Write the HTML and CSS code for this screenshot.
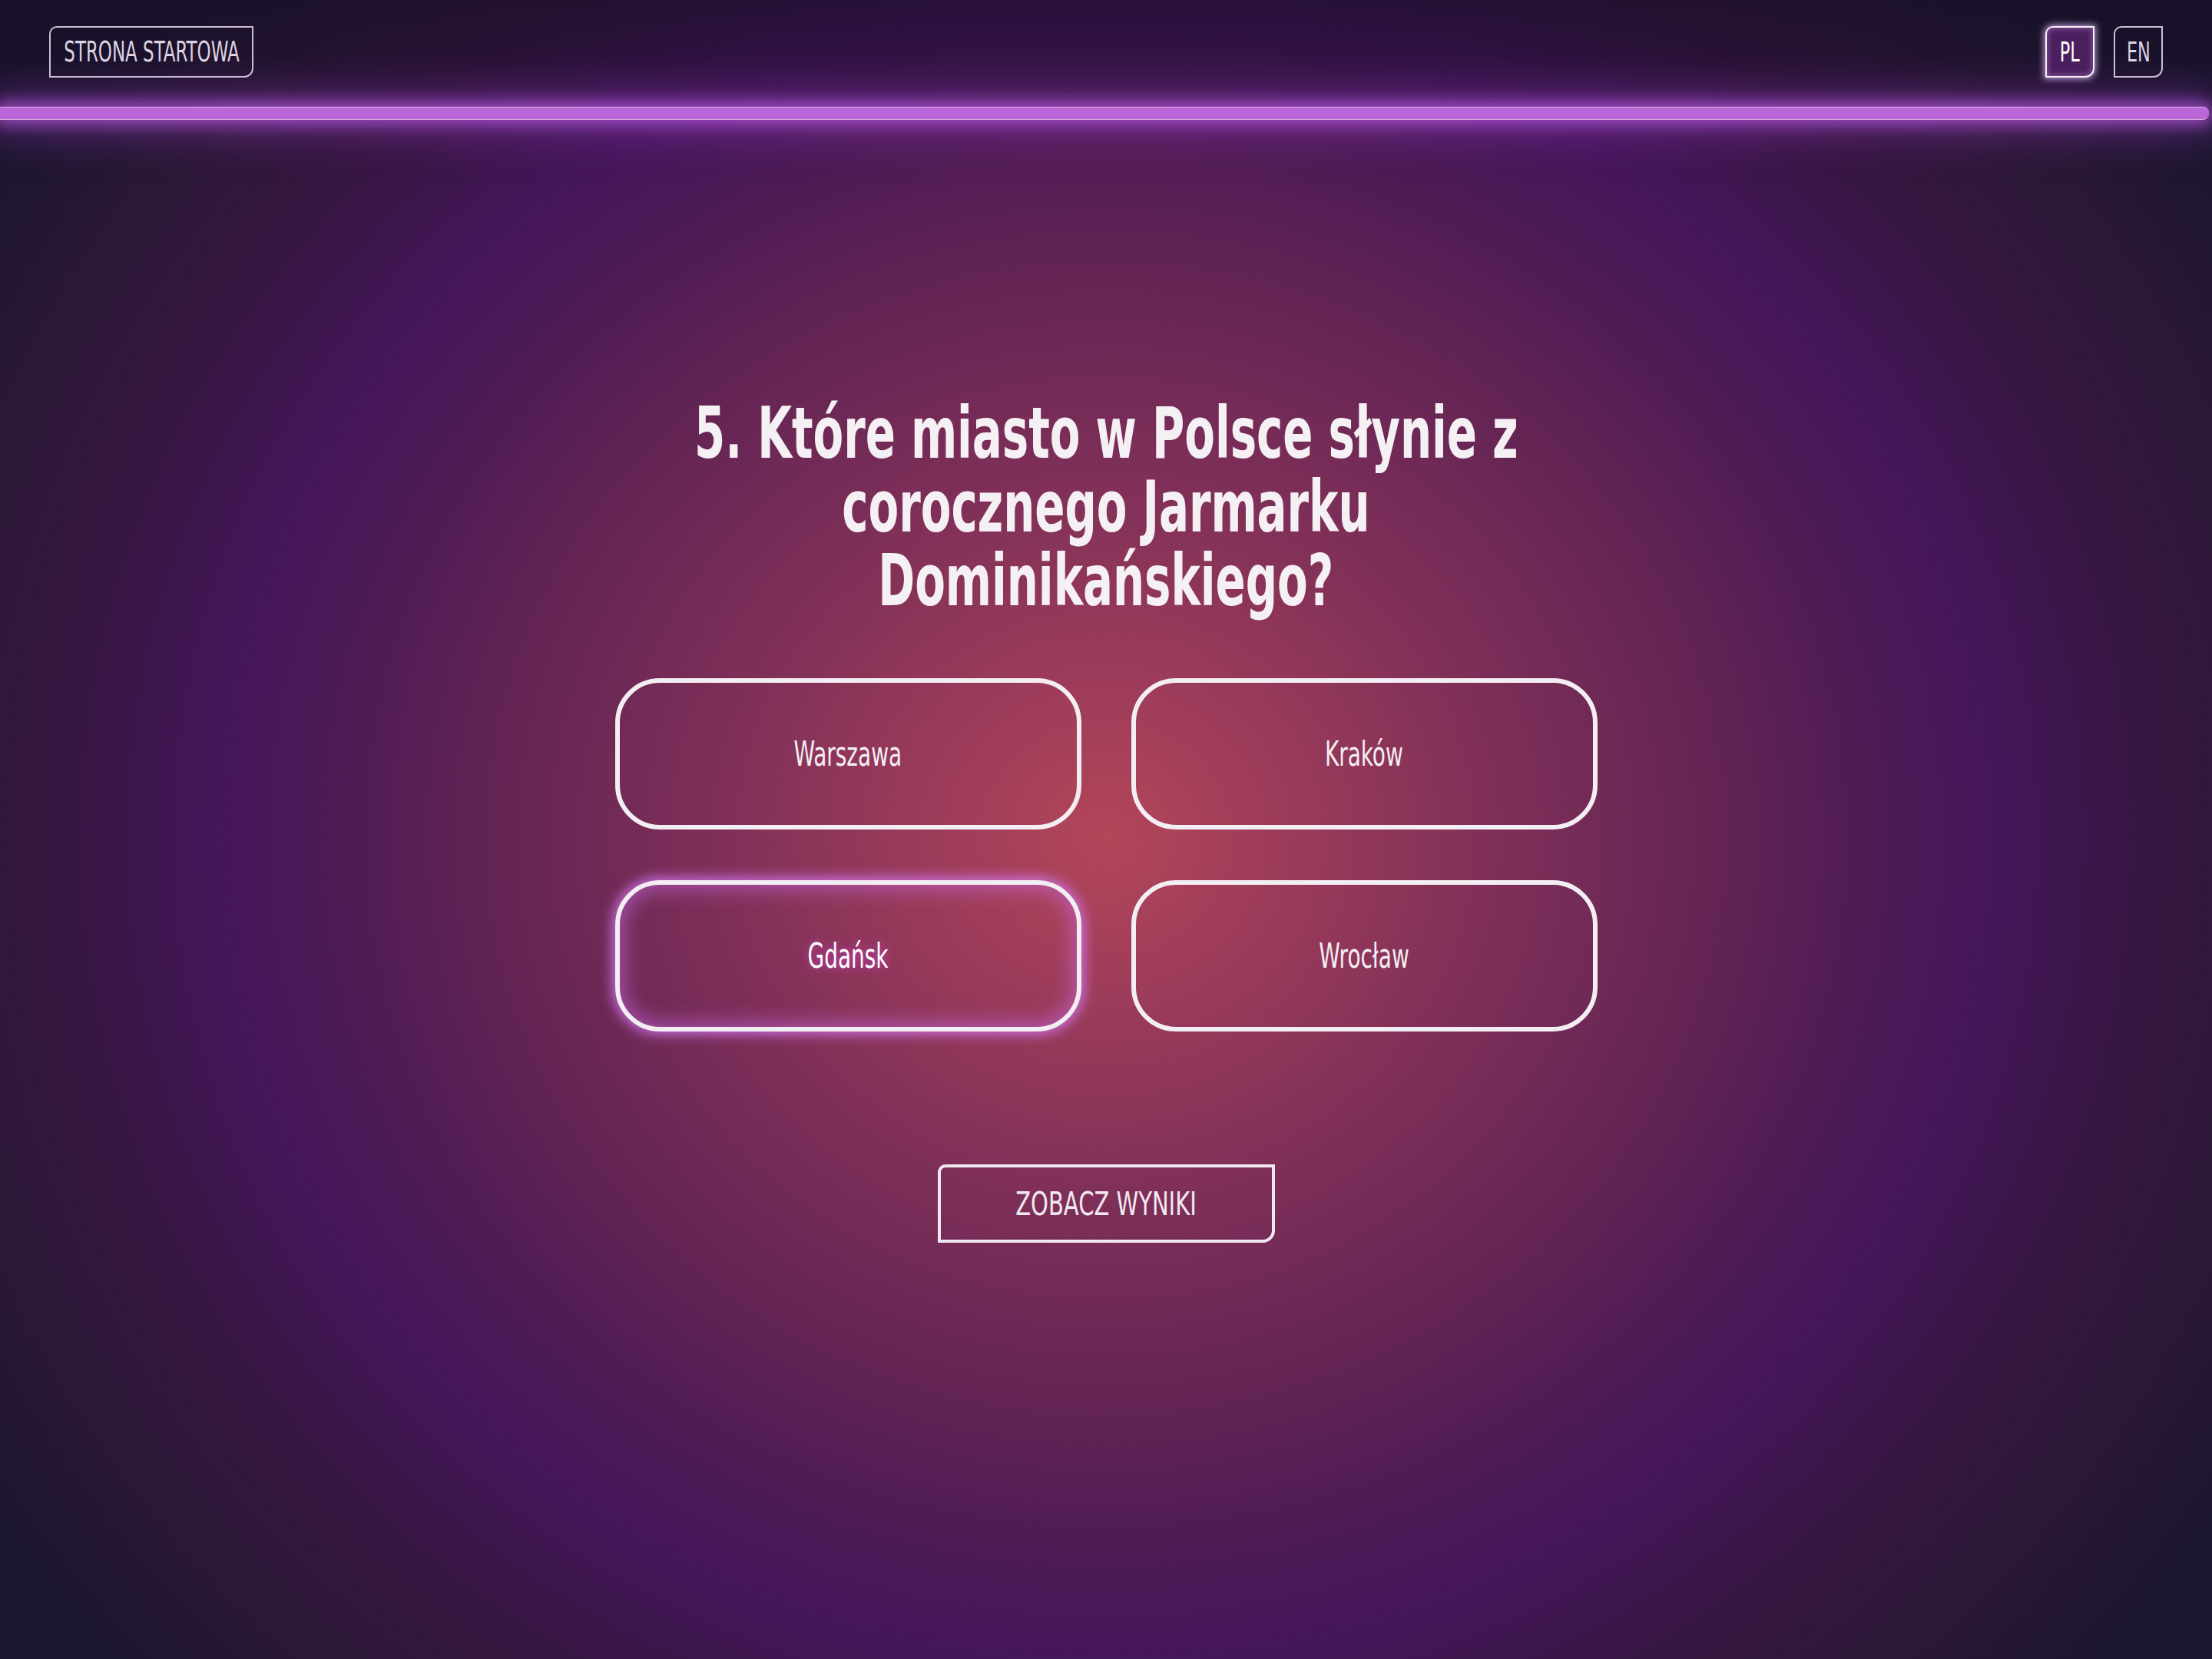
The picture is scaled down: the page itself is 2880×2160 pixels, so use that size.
FILE: index.html
```html
<!DOCTYPE html>
<html lang="pl">
<head>
<meta charset="utf-8">
<title>Quiz</title>
<link rel="stylesheet" href="styles.css">
</head>
<body>
<div class="page">
  <header class="topbar">
    <div class="topbar-row">
      <button class="nav-btn home-btn"><span class="narrow">STRONA STARTOWA</span></button>
      <div class="lang">
        <button class="nav-btn lang-btn active"><span class="narrow">PL</span></button>
        <button class="nav-btn lang-btn"><span class="narrow">EN</span></button>
      </div>
    </div>
    <div class="neon-line"></div>
  </header>
  <main class="quiz">
    <h1 class="question">
      <span class="narrow q-line">5. Które miasto w Polsce słynie z</span>
      <span class="narrow q-line">corocznego Jarmarku</span>
      <span class="narrow q-line">Dominikańskiego?</span>
    </h1>
    <div class="answers">
      <button class="answer"><span class="narrow">Warszawa</span></button>
      <button class="answer"><span class="narrow">Kraków</span></button>
      <button class="answer selected"><span class="narrow">Gdańsk</span></button>
      <button class="answer"><span class="narrow">Wrocław</span></button>
    </div>
    <button class="results-btn"><span class="narrow wide">ZOBACZ WYNIKI</span></button>
  </main>
</div>
</body>
</html>
```
FILE: styles.css
```css
html, body {
  margin: 0;
  padding: 0;
}
body {
  width: 2880px;
  height: 2160px;
  overflow: hidden;
  font-family: "DejaVu Sans Condensed", "DejaVu Sans", "Liberation Sans", sans-serif;
  font-stretch: condensed;
  color: #f3eef3;
  background:
    radial-gradient(ellipse 1720px 1600px at 50% 50.5%,
      #b34659 0%,
      #9b3b5a 14%,
      #7e2f58 30%,
      #652554 45%,
      #4e1b55 58%,
      #44165a 67%,
      #361641 79%,
      #2a1836 90%,
      #1d1630 100%);
}
.page {
  display: flex;
  flex-direction: column;
  height: 2160px;
}
button {
  font-family: inherit;
  font-stretch: condensed;
  background: transparent;
  cursor: pointer;
  padding: 0;
}
.narrow {
  display: inline-block;
  white-space: nowrap;
  transform: scaleX(0.69);
  transform-origin: center;
}
.narrow.wide {
  transform: scaleX(0.75);
}
.topbar {
  padding-top: 34px;
  background: linear-gradient(to bottom, rgba(18, 12, 34, 0.55), rgba(18, 12, 34, 0.2));
}
.topbar-row {
  display: flex;
  justify-content: space-between;
  align-items: center;
  padding: 0 64px;
}
.nav-btn {
  height: 67px;
  border: 2px solid #cdbdd2;
  border-radius: 10px 0 12px 0;
  color: #dcd2e0;
  font-size: 37px;
  display: flex;
  align-items: center;
  justify-content: center;
  overflow: visible;
}
.home-btn {
  width: 266px;
}
.lang {
  display: flex;
  gap: 25px;
}
.lang-btn {
  width: 64px;
  font-size: 36px;
}
.lang-btn.active {
  border-color: #f6eefa;
  background: #4b1f5f;
  color: #ffffff;
  box-shadow: 0 0 8px 2px rgba(230, 190, 255, 0.75), inset 0 0 8px rgba(230, 190, 255, 0.45);
}
.neon-line {
  margin-top: 38px;
  height: 15px;
  margin-right: 4px;
  border-top: 1px solid #dab6e4;
  border-bottom: 1px solid #dab6e4;
  border-radius: 0 8px 8px 0;
  background: #bb66d6;
  box-shadow: 0 0 20px 6px rgba(175, 85, 215, 0.8), 0 0 55px 14px rgba(150, 60, 190, 0.5);
}
.quiz {
  display: flex;
  flex-direction: column;
  align-items: center;
  padding-top: 360px;
}
.question {
  margin: 0;
  display: flex;
  flex-direction: column;
  align-items: center;
  font-size: 93px;
  line-height: 96px;
  font-weight: 700;
  text-align: center;
  color: #f4f0f4;
}
.answers {
  margin-top: 79px;
  display: grid;
  grid-template-columns: 607px 607px;
  column-gap: 65px;
  row-gap: 66px;
}
.answer {
  height: 197px;
  border: 6px solid #f3eef3;
  border-radius: 58px;
  color: #f3eef3;
  font-size: 45px;
}
.answer.selected {
  box-shadow: 0 0 16px 4px rgba(210, 120, 240, 0.85), inset 0 0 26px 6px rgba(205, 110, 235, 0.55);
  text-shadow: 0 0 14px rgba(200, 70, 200, 0.95);
  color: #ffffff;
}
.results-btn {
  margin-top: 173px;
  width: 439px;
  height: 102px;
  border: 4px solid #f1e9f2;
  border-radius: 10px 0 16px 0;
  color: #f1e9f2;
  font-size: 43px;
}
```
